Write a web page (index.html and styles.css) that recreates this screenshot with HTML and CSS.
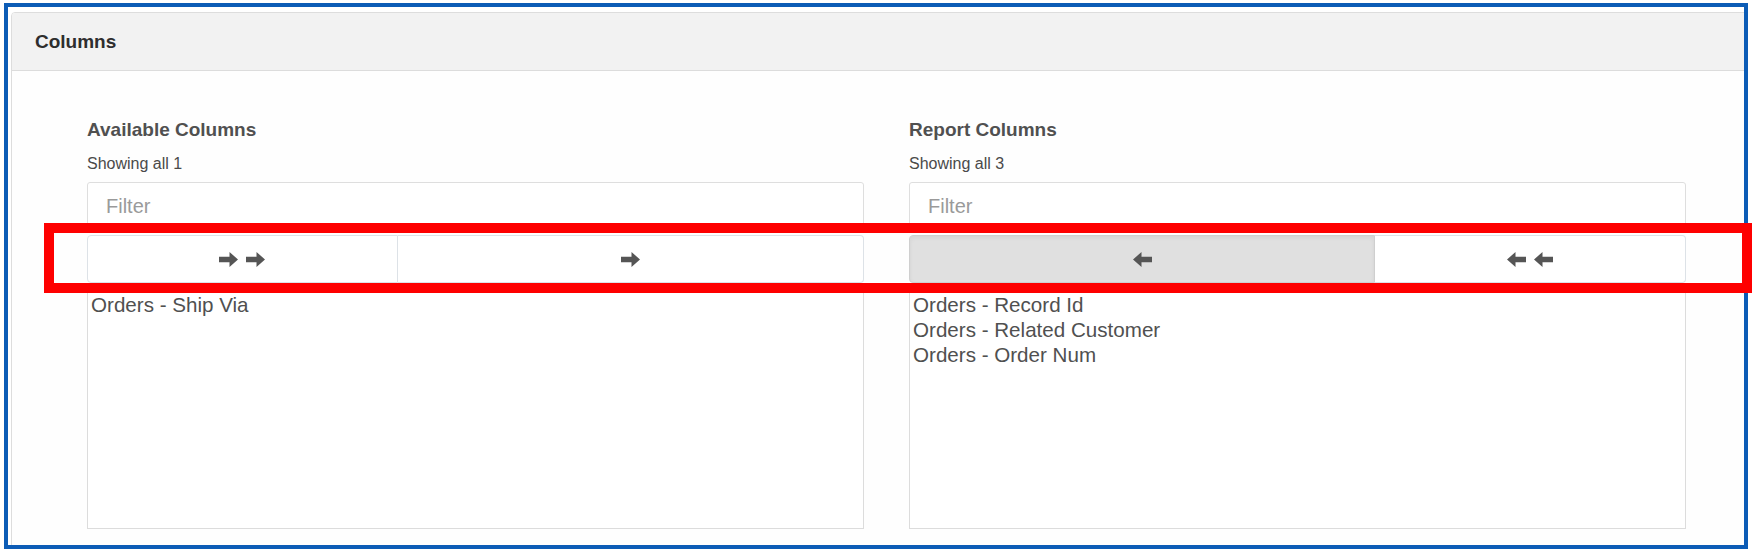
FILE: index.html
```html
<!DOCTYPE html>
<html>
<head>
<meta charset="utf-8">
<link rel="stylesheet" href="styles.css">
</head>
<body>
<div class="frame">
  <div class="panel">
    <div class="panel-heading">Columns</div>
    <div class="panel-body">
      <div class="col">
        <div class="col-title">Available Columns</div>
        <div class="col-count">Showing all 1</div>
        <input class="filter" type="text" placeholder="Filter">
        <div class="btn-group">
          <button class="btn narrow" type="button">
            <svg class="arrow" viewBox="0 0 19 15"><path d="M0 4.8H10.5V0L19 7.5L10.5 15V10.2H0Z"/></svg>
            <svg class="arrow" viewBox="0 0 19 15"><path d="M0 4.8H10.5V0L19 7.5L10.5 15V10.2H0Z"/></svg>
          </button>
          <button class="btn wide" type="button">
            <svg class="arrow" viewBox="0 0 19 15"><path d="M0 4.8H10.5V0L19 7.5L10.5 15V10.2H0Z"/></svg>
          </button>
        </div>
        <div class="list">
          <div class="opt">Orders - Ship Via</div>
        </div>
      </div>
      <div class="col">
        <div class="col-title">Report Columns</div>
        <div class="col-count">Showing all 3</div>
        <input class="filter" type="text" placeholder="Filter">
        <div class="btn-group">
          <button class="btn wide active" type="button">
            <svg class="arrow" viewBox="0 0 19 15"><path d="M19 4.8H8.5V0L0 7.5L8.5 15V10.2H19Z"/></svg>
          </button>
          <button class="btn narrow" type="button">
            <svg class="arrow" viewBox="0 0 19 15"><path d="M19 4.8H8.5V0L0 7.5L8.5 15V10.2H19Z"/></svg>
            <svg class="arrow" viewBox="0 0 19 15"><path d="M19 4.8H8.5V0L0 7.5L8.5 15V10.2H19Z"/></svg>
          </button>
        </div>
        <div class="list">
          <div class="opt">Orders - Record Id</div>
          <div class="opt">Orders - Related Customer</div>
          <div class="opt">Orders - Order Num</div>
        </div>
      </div>
    </div>
  </div>
</div>
<div class="highlight"></div>
</body>
</html>
```

FILE: styles.css
```css
html, body {
  margin: 0;
  padding: 0;
  background: #ffffff;
}

body {
  position: relative;
  width: 1754px;
  height: 552px;
  overflow: hidden;
  font-family: "Liberation Sans", Arial, Helvetica, sans-serif;
  color: #555555;
}

.frame {
  box-sizing: border-box;
  margin: 3px 0 0 4px;
  width: 1744px;
  height: 546px;
  border: 4px solid #0c5cb6;
  overflow: hidden;
  background: #ffffff;
  padding: 5px 0 0 3px;
}

.panel {
  width: 1760px;
  height: 600px;
  border: 1px solid #dddddd;
  border-radius: 4px;
  background: #fefefe;
  overflow: hidden;
}

.panel-heading {
  box-sizing: border-box;
  height: 58px;
  display: flex;
  align-items: center;
  padding-left: 23px;
  background: #f2f2f2;
  border-bottom: 1px solid #dcdcdc;
  font-size: 19px;
  font-weight: bold;
  color: #2e2e2e;
}

.panel-body {
  display: grid;
  grid-template-columns: 777px 777px;
  column-gap: 45px;
  padding: 48px 0 0 75px;
}

.col {
  display: flex;
  flex-direction: column;
}

.col-title {
  font-size: 19px;
  line-height: 22px;
  font-weight: bold;
  color: #505050;
}

.col-count {
  margin-top: 13px;
  font-size: 16px;
  line-height: 20px;
  color: #4a4a4a;
}

.filter {
  box-sizing: border-box;
  margin: 8px 0 0 0;
  width: 100%;
  height: 48px;
  padding: 0 0 0 18px;
  border: 1px solid #dedede;
  border-radius: 3px;
  background: #ffffff;
  font-family: inherit;
  font-size: 20px;
  color: #555555;
  outline: none;
}

.filter::placeholder {
  color: #9a9a9a;
}

.btn-group {
  display: flex;
  margin-top: 5px;
  height: 48px;
}

.btn {
  box-sizing: border-box;
  height: 48px;
  display: flex;
  align-items: center;
  justify-content: center;
  gap: 8px;
  margin: 0;
  padding: 0;
  background: #ffffff;
  border: 1px solid #dde2e7;
  color: #555555;
}

.btn.narrow {
  width: 40%;
}

.btn.wide {
  width: 60%;
}

.btn:first-child {
  border-radius: 4px 0 0 4px;
}

.btn:last-child {
  border-radius: 0 4px 4px 0;
  border-left: none;
}

.btn.active {
  background: #e0e0e0;
  border-color: #cfcfcf;
  box-shadow: inset 0 2px 4px rgba(0, 0, 0, 0.06);
}

.arrow {
  width: 19px;
  height: 15px;
  fill: #555555;
}

.list {
  box-sizing: border-box;
  margin-top: 5px;
  height: 241px;
  border: 1px solid #dcdcdc;
  padding: 3px 0 0 3px;
  background: #ffffff;
}

.opt {
  font-size: 20.6px;
  line-height: 25px;
  color: #505050;
}

.highlight {
  position: absolute;
  left: 44px;
  top: 223px;
  width: 1708px;
  height: 70px;
  box-sizing: border-box;
  border: 10px solid #fe0000;
  pointer-events: none;
}
```
